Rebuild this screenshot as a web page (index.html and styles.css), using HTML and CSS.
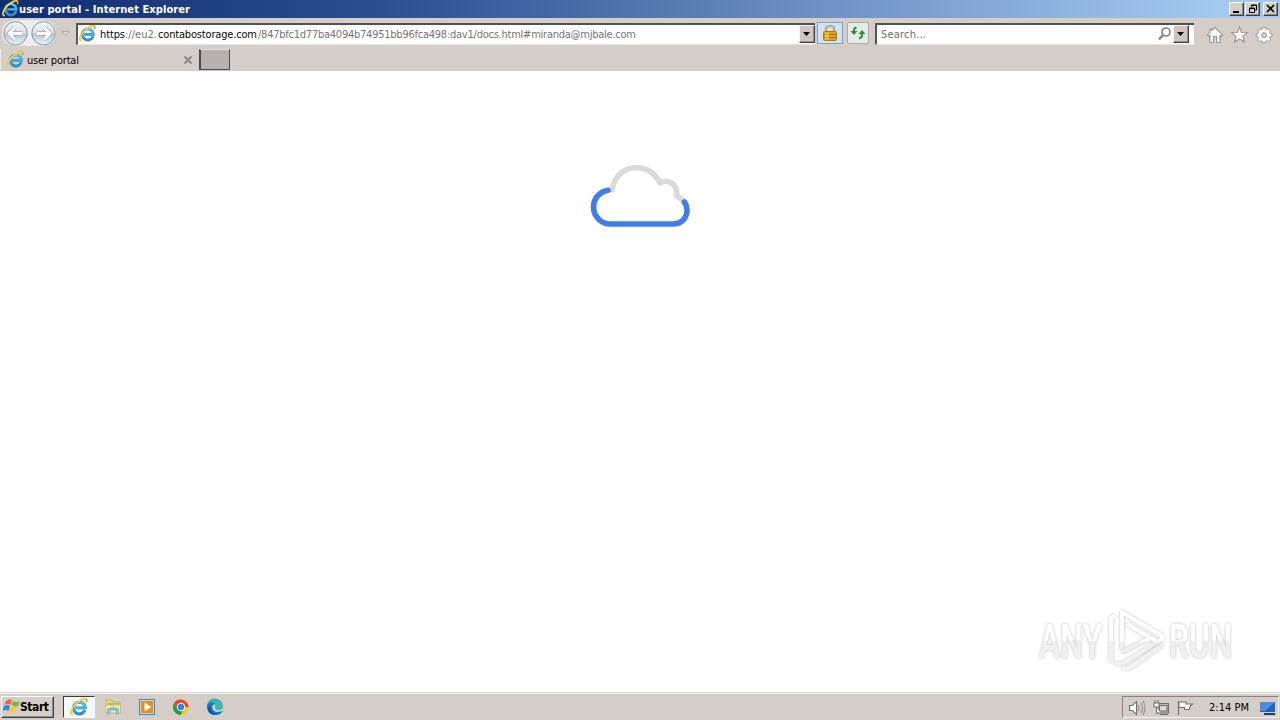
FILE: index.html
```html
<!DOCTYPE html>
<html lang="en">
<head>
<meta charset="utf-8">
<title>user portal</title>
<link rel="stylesheet" href="styles.css">
</head>
<body>
<svg class="defs" width="0" height="0">
  <defs>
    <linearGradient id="blue" x2="0" y2="1"><stop stop-color="#65ccef"/><stop offset="1" stop-color="#2390d4"/></linearGradient>
    <linearGradient id="nav" x2="0" y2="1"><stop stop-color="#f4f5f7"/><stop offset=".48" stop-color="#dce2e9"/><stop offset=".52" stop-color="#b9c6d2"/><stop offset="1" stop-color="#e6f3fa"/></linearGradient>
    <symbol id="ie" viewBox="0 0 16 16">
      <path d="M13.2 10.7A5.2 5.2 0 1 1 13.5 8.8H5" fill="none" stroke="#2788bd" stroke-width="2.6"/>
      <path d="M13.2 10.7A5.2 5.2 0 1 1 13.5 8.8H5" fill="none" stroke="url(#blue)" stroke-width="1.8"/>
      <path d="M2.7 14.8C-.5 14.7.8 9.8 4.9 5.6S13.3-.2 14.5 1.3c.6.7.4 1.6 0 2.7" fill="none" stroke="#d5a32b" stroke-width="1.6"/>
      <path d="M2.7 14.8C-.5 14.7.8 9.8 4.9 5.6S13.3-.2 14.5 1.3" fill="none" stroke="#ffe15c" stroke-width="1"/>
    </symbol>
  </defs>
</svg>
<header class="titlebar">
  <svg class="title-icon" width="17" height="17"><use href="#ie"/></svg>
  <svg class="title-text" width="180" height="18"><text x="0" y="13" textLength="171">user portal - Internet Explorer</text></svg>
  <div class="window-buttons">
    <span class="button"><svg width="14" height="12"><path d="M3 9h6" stroke="#000" stroke-width="2"/></svg></span>
    <span class="button"><svg width="14" height="12"><path d="M5.5 4V2h5v5H9M5 2.5h6M3.5 5h5v4.5h-5zM3 5.5h6" fill="none" stroke="#000"/></svg></span>
    <span class="button close"><svg width="14" height="12"><path d="M3 2l7 7M10 2l-7 7" stroke="#000" stroke-width="1.7"/></svg></span>
  </div>
</header>
<div class="toolbar">
  <svg class="navigation" width="76" height="31">
    <path d="M15 2H44Q56 4 56 15T44 28H15Q2 27 2 15T15 2" fill="#eeecec"/>
    <g fill="url(#nav)" stroke="#8496a7"><circle cx="15.5" cy="15.3" r="11.7"/><circle cx="43.5" cy="15.3" r="11.7"/></g>
    <path d="M22 15.5H9M15 9.5l-6 6 6 6M37 15.5h13M44 9.5l6 6-6 6" fill="none" stroke="#9aa8b6" stroke-width="4.4"/>
    <path d="M22 15.5H9M15 9.5l-6 6 6 6M37 15.5h13M44 9.5l6 6-6 6" fill="none" stroke="#fff" stroke-width="3"/>
    <path d="M61.5 13.5h8l-4 4z" fill="#dedad6" stroke="#aaa6a3"/>
  </svg>
  <div class="field address">
    <svg class="address-icon" width="17" height="17"><use href="#ie"/></svg>
    <svg class="url" width="560" height="19"><g class="dark"><text x="4" y="13" textLength="25">https</text><text x="62" y="13" textLength="99">contabostorage.com</text></g><g class="gray"><text x="29" y="13" textLength="32">://eu2.</text><text x="162" y="13" textLength="378">/847bfc1d77ba4094b74951bb96fca498:dav1/docs.html#miranda@mjbale.com</text></g></svg>
    <span class="drop"><svg width="14" height="16"><path d="M3 6h7l-3.5 4z"/></svg></span>
  </div>
  <span class="security"><svg width="24" height="20"><path d="M8 10V6q0-3 4-3t4 3v4" fill="none" stroke="#9b8c61" stroke-width="2.2"/><path d="M8 10V6q0-3 4-3t4 3v4" fill="none" stroke="#ebe3c4" stroke-width=".7"/><rect x="5.5" y="8.5" width="13" height="9" rx="1" fill="#dfa414" stroke="#b87b0b"/><path d="M6 11.5h12M6 14.5h12" stroke="#a6740f"/><path d="M7 9.5h4v7H7" fill="#f3cc48" opacity=".65"/></svg></span>
  <span class="refresh"><svg width="20" height="20"><path d="M6 10V6.8Q6 5 8.5 4.5M14 9v3.5q0 2-3 3" fill="none" stroke="#25943a" stroke-width="2"/><path d="M2.5 8H9.5L6 12zM10.5 11h7L14 7z" fill="#25943a"/></svg></span>
  <div class="field search">
    <svg class="search-text" width="60" height="19"><text x="4" y="13" textLength="45">Search...</text></svg>
    <svg class="magnifier" width="16" height="18"><circle cx="9" cy="7" r="4" fill="#fff" stroke="#86868a" stroke-width="1.7"/><path d="M6 10l-4 4.5" stroke="#86868a" stroke-width="2.5"/></svg>
    <span class="drop"><svg width="14" height="16"><path d="M3 6h7l-3.5 4z"/></svg></span>
  </div>
  <svg class="commands" width="78" height="31" fill="#fff" stroke="#969395" stroke-width="1.1">
    <path d="M13 9.5l7.7 7.4-1.5 1.5-1.2-1.1v7.2h-3.4v-6h-3.2v6H8v-7.2l-1.2 1.1-1.5-1.5L8 14.3v-3.2h2v1.2z"/>
    <path d="M37.5 9.1l2.1 5.4 5.8.3-4.5 3.6 1.5 5.6-4.9-3.1-4.9 3.1 1.5-5.6-4.5-3.6 5.8-.3z"/>
    <g transform="translate(62.1 17) scale(.88) translate(-62.1 -17.7)"><path d="M60.6 9h3l.5 2 1.5.6 1.8-1.1 2.1 2.1-1.1 1.8.6 1.5 2 .5v3l-2 .5-.6 1.5 1.1 1.8-2.1 2.1-1.8-1.1-1.5.6-.5 2h-3l-.5-2-1.5-.6-1.8 1.1-2.1-2.1 1.1-1.8-.6-1.5-2-.5v-3l2-.5.6-1.5-1.1-1.8 2.1-2.1 1.8 1.1 1.5-.6z"/><circle cx="62.1" cy="17.9" r="2.8" fill="#d5d0cb"/></g>
  </svg>
</div>
<div class="tabs">
  <div class="tab"><svg class="tab-icon" width="17" height="17"><use href="#ie"/></svg><svg class="tab-text" width="60" height="20"><text x="0" y="14" textLength="52">user portal</text></svg><svg class="tab-close" width="12" height="20"><path d="M2.5 7.5l7 7M9.5 7.5l-7 7" stroke="#898587" stroke-width="1.8"/></svg></div>
  <div class="new-tab"></div>
</div>
<main>
  <svg class="cloud" width="106" height="68" fill="none" stroke-width="5.6" stroke-linecap="round" stroke-linejoin="round">
    <path d="M25 28C27 14 37 5.500 50 5.800c10 .2 18 5.200 23 15.200 9-5 18 2 16.500 13 4 2 6 4 7 6" stroke="#dadada"/>
    <path d="M21 28.200A17 17 0 0 0 23 62h63c12 0 17.500-12 11.500-22" stroke="#427cec"/>
  </svg>
  <svg class="watermark" width="251" height="80">
    <defs><linearGradient id="mark" gradientUnits="userSpaceOnUse" x1="0" y1="13" x2="0" y2="72"><stop stop-color="#fff"/><stop offset=".51" stop-color="#fff"/><stop offset=".53" stop-color="#eee"/><stop offset="1" stop-color="#f5f5f5"/></linearGradient></defs>
    <g class="brand"><text x="10" y="61" textLength="63" lengthAdjust="spacingAndGlyphs">ANY</text><text x="140" y="61" textLength="63" lengthAdjust="spacingAndGlyphs">RUN</text></g>
    <g class="play" transform="translate(0 1)"><path d="M82 64V22q0-3 4-4M93 51V14l40 24q2 1 0 3L98 63q-5 4-12 2M98 26l29 17M93 54l28-14M94 69q4 3 8 0l31-22"/></g>
  </svg>
</main>
<footer class="taskbar">
  <div class="start"><svg width="18" height="18"><path d="M4 4q4-3 6-1L8.500 8q-3-2-6 0z" fill="#ef6531"/><path d="M11 4q3 2 7 0l-2 5q-3 2-6-1z" fill="#75b83e"/><path d="M2 9q3-2 6 0l-1.500 5q-3-2-6 0z" fill="#3389d4"/><path d="M9 9q3 2 6 1l-2 5q-3 1-6-1z" fill="#f8c637"/></svg><svg width="32" height="20"><text x="0" y="14" textLength="29">Start</text></svg></div>
  <div class="task-active"><svg width="18" height="18"><use href="#ie"/></svg></div>
  <svg class="apps" width="140" height="24">
    <g><path d="M10 5h6l1 2h7v5H10z" fill="#f2d477" stroke="#cfb05a"/><path d="M12 8h12v4H12z" fill="#8cc58b"/><path d="M9.500 10h15v8h-15z" fill="#f9e79d" stroke="#d8bd70"/><path d="M11.500 19v-5q5.500-3 11 0v5H20v-4h-6v4z" fill="#8acdea" stroke="#6aa9c8" stroke-width=".8"/></g>
    <rect x="43.5" y="4.5" width="15" height="15" fill="#b9dbef" stroke="#4488b8"/><path d="M45 6h12v12H45z" fill="#f28b13"/><path d="M48.500 7.500v9l7-4.500z" fill="#fff"/>
    <circle cx="85" cy="12" r="8" fill="#f9ca18"/><path d="M85 12h7.5A8 8 0 0 0 78 8l3.5 6z" fill="#e64432"/><path d="M78 8a8 8 0 0 0 6.5 12l3.5-6-3-2-3.5 2z" fill="#1b9d52"/><circle cx="85" cy="12" r="4.2" fill="#fff"/><circle cx="85" cy="12" r="3.2" fill="#397ee5"/>
    <path d="M111 11c0-10 16-10 16 1 0 4-8 4-8 1 0-2 1-5-3-5-3 0-5 2-5 5" fill="#38b9ac"/><path d="M111 12c0-5 6-6 8-3-5 1-3 8 3 8 2 0 4-1 5-1-5 8-16 3-16-4" fill="#1574ca"/><path d="M115 11c-2 5 2 9 7 8-8 3-14-5-7-8" fill="#0c4f9c"/>
  </svg>
  <div class="tray">
    <svg class="tray-icons" width="73" height="22" fill="none" stroke="#717171" stroke-width="1.1"><path d="M6.5 8.5h3l4-4v13l-4-4h-3z" fill="#fff"/><path d="M15 8q2 3 0 6M18 6q3 5 0 10M20 4q4 7 0 14" stroke="#929090"/><path d="M35 6.500h10.500v9.500H35z" fill="#bbb"/><path d="M36.500 8.500h7.500v5.500h-7.500zM37 17.500h8" fill="#ddd"/><path d="M31 6h5v4h-5zM32 3v3M35 3v3M33.500 10v6h4" fill="#fff"/><path d="M55.500 4v14M56 5h7v2h6.500q-3 2-3 5.500h-5v-2H56z" fill="#fff"/></svg>
    <svg class="clock" width="44" height="20"><text x="0" y="14" textLength="40">2:14 PM</text></svg>
    <svg class="desktop-icon" width="16" height="16"><path d="M0 1h15v10H0z" fill="#2561bd"/><path d="M0 1h15L5 10H0z" fill="#4b8edb"/><path d="M4 12h11v2H4z" fill="#183b77"/></svg>
  </div>
</footer>
</body>
</html>
```
FILE: styles.css
```css
* { box-sizing: border-box; }
body { margin: 0; width: 1280px; height: 720px; overflow: hidden; display: flex; flex-direction: column; background: #fff; font: 11px "DejaVu Sans Condensed", "DejaVu Sans", sans-serif; }
svg { display: block; flex: none; }
.defs { position: absolute; }
.titlebar { height: 18px; display: flex; flex: none; background: linear-gradient(90deg, #102d70, #2b4f90 30%, #6c8ec3 63%, #a4c9f0 95%); }
.title-icon { margin-left: 2px; }
.title-text { font-weight: bold; fill: #fff; }
.window-buttons { display: flex; margin: 2px 2px 0 auto; }
.button { width: 15px; height: 14px; background: #d4d0c8; border: 1px solid #fff; border-right-color: #404040; border-bottom-color: #404040; box-shadow: inset -1px -1px #888; }
.button + .button { margin-left: 1px; }
.button.close { margin-left: 3px; }
.toolbar { height: 31px; display: flex; flex: none; align-items: flex-start; background: #d5cec8; }
.field { height: 22px; flex: none; margin-top: 5px; display: flex; background: #fff; border-top: 2px solid #505050; border-left: 2px solid #555; border-bottom: 1px solid #e7e3de; }
.address { width: 739px; }
.address-icon { margin: 0 0 0 1px; }
.url { width: 564px; }
.dark { fill: #090909; }
.gray { fill: #77737a; }
.drop { width: 16px; height: 18px; margin-left: auto; border: 1px solid #f6f3ef; border-right-color: #404040; border-bottom-color: #404040; background: #cec7c1; box-shadow: inset -1px -1px #969089; }
.security { width: 26px; flex: none; height: 22px; margin: 4px 0 0 2px; background: #cfe2f8; border: 1px solid #75a2d0; }
.refresh { width: 22px; flex: none; height: 22px; margin: 4px 0 0 4px; border: 1px solid #aaa9a9; border-radius: 2px; background: #e6ebe8; }
.search { width: 319px; margin-left: 6px; }
.search-text { fill: #706d72; }
.magnifier { margin-left: auto; }
.search .drop { margin: 0 5px 0 0; }
.commands { margin-left: 8px; }
.tabs { height: 22px; display: flex; flex: none; background: #d5cec8; border-bottom: 1px solid #d0cbc6; }
.tab { width: 199px; height: 21px; display: flex; border-left: 1px solid #eeeae6; }
.tab-icon { margin: 2px 0 0 6px; }
.tab-text { margin-left: 3px; margin-top: 1px; }
.tab-close { margin-left: 95px; }
.new-tab { width: 31px; height: 21px; background: #b9b1ad; border: 1px solid #4d4949; border-top-color: #e5e0dc; border-left-width: 2px; }
main { flex: 1; min-height: 0; display: flex; justify-content: space-between; }
.cloud { margin: 91px 0 0 587px; }
.watermark { margin-top: auto; margin-bottom: 15px; filter: drop-shadow(0 0 1.5px rgba(0,0,0,.25)); }
.brand { font: 600 48px/1 "Roboto", sans-serif; fill: url(#mark); }
.play { fill: none; stroke: url(#mark); stroke-width: 4; stroke-linejoin: round; }
.taskbar { height: 28px; display: flex; flex: none; background: #d5cec8; border-top: 1px solid #d9d9d9; box-shadow: inset 0 1px #f5f1ed; }
.start { width: 53px; height: 22px; margin: 3px 9px 0 1px; display: flex; border: 1px solid #fff; border-right-color: #404040; border-bottom-color: #404040; box-shadow: inset -1px -1px #938f8b; font-weight: bold; font-size: 12px; }
.task-active { width: 32px; height: 22px; margin-top: 3px; border: 1px solid #fff; border-top-color: #3a3a3a; border-left-color: #3a3a3a; background: #f8f6f4; }
.task-active svg { margin: 1px 0 0 6px; }
.apps { margin: 2px 0 0 1px; }
.tray { width: 157px; height: 22px; margin: 3px 1px 0 auto; display: flex; border: 1px solid #f4f1ed; border-top-color: #88837f; border-left-color: #88837f; }
.clock { margin-left: 13px; }
.desktop-icon { margin: 4px 0 0 7px; }
```
